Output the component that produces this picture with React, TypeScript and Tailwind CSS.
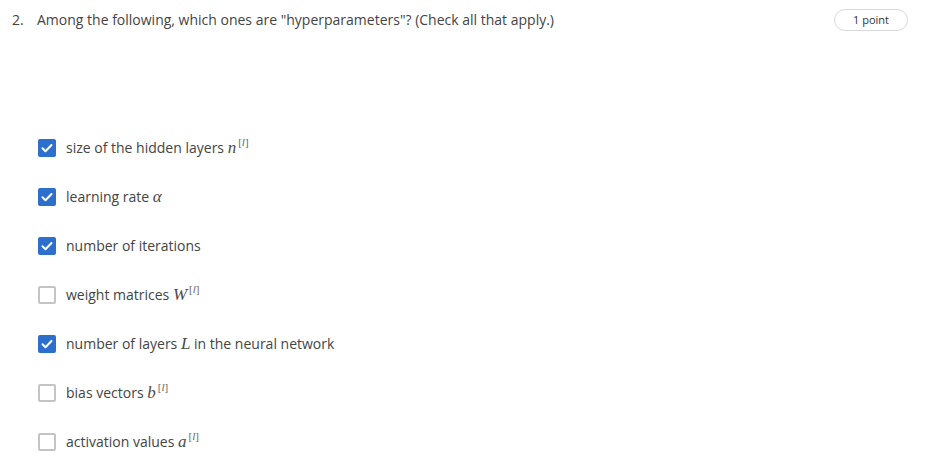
const OPTIONS: { label: string; math?: string; sup?: boolean; after?: string; checked: boolean }[] = [
  { label: "size of the hidden layers ", math: "n", sup: true, checked: true },
  { label: "learning rate ", math: "α", checked: true },
  { label: "number of iterations", checked: true },
  { label: "weight matrices ", math: "W", sup: true, checked: false },
  { label: "number of layers ", math: "L", after: " in the neural network", checked: true },
  { label: "bias vectors ", math: "b", sup: true, checked: false },
  { label: "activation values ", math: "a", sup: true, checked: false },
];

function Box({ checked }: { checked: boolean }) {
  if (checked) {
    return (
      <span className="flex h-[18px] w-[18px] shrink-0 items-center justify-center rounded-[2px] bg-[#2d6fcc]">
        <svg width="14" height="14" viewBox="0 0 14 14" fill="none">
          <path d="M2.5 7.2l3 3 6-6.2" stroke="white" strokeWidth="2" strokeLinecap="round" strokeLinejoin="round" />
        </svg>
      </span>
    );
  }
  return <span className="h-[18px] w-[18px] shrink-0 rounded-[2px] border-2 border-[#c4c4c4] bg-white" />;
}

export default function App() {
  return (
    <div className="h-[475px] w-[926px] bg-white font-['Open_Sans',sans-serif] text-[#444]">
      <div className="flex items-start justify-between pl-[12px] pr-[18px] pt-[9px]">
        <div className="flex pt-[1px] text-[14px] leading-[20px]">
          <span className="w-[25px]">2.</span>
          <span>Among the following, which ones are "hyperparameters"? (Check all that apply.)</span>
        </div>
        <span className="rounded-full border border-[#d9d9d9] px-[18px] py-[3px] text-[11px] leading-[14px] text-[#333]">
          1 point
        </span>
      </div>

      <div className="flex flex-col gap-[31px] pl-[38px] pt-[108px]">
        {OPTIONS.map((o) => (
          <label key={o.label + (o.math ?? "")} className="flex h-[18px] items-center gap-[10px] text-[14px]">
            <Box checked={o.checked} />
            <span className="whitespace-nowrap leading-[18px]">
              {o.label}
              {o.math && (
                <span className="font-['Liberation_Serif',serif] text-[17px] italic text-[#4a4a4a]">{o.math}</span>
              )}
              {o.sup && (
                <span className="relative top-[-7px] ml-[2px] font-['Liberation_Serif',serif] text-[11px] text-[#666]">
                  [<i>l</i>]
                </span>
              )}
              {o.after}
            </span>
          </label>
        ))}
      </div>
    </div>
  );
}
